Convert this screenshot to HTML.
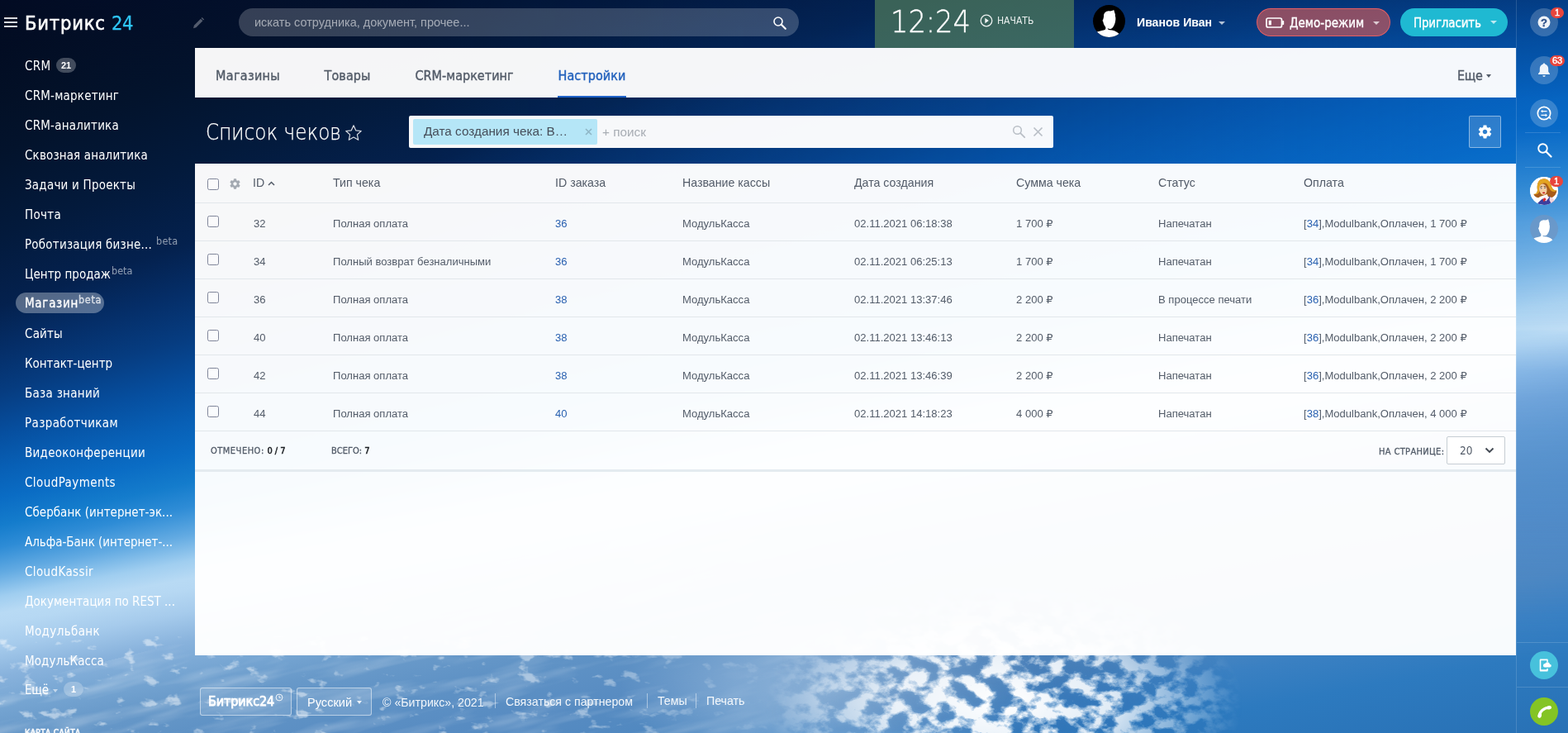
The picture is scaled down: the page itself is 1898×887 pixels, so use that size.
<!DOCTYPE html>
<html lang="ru">
<head>
<meta charset="utf-8">
<title>Список чеков</title>
<style>
*{box-sizing:border-box;margin:0;padding:0}
html,body{width:1898px;height:887px;overflow:hidden}
body{position:relative;font-family:"Liberation Sans","DejaVu Sans",sans-serif;font-size:13px;color:#535c69;background:#0b5cb5}
a{text-decoration:none;color:inherit}
.a{position:absolute;white-space:nowrap}
.os{font-family:"DejaVu Sans Condensed","DejaVu Sans","Liberation Sans",sans-serif;font-stretch:condensed}
.lt{font-family:"DejaVu Sans Light","DejaVu Sans","Liberation Sans",sans-serif;font-weight:200}
svg{display:block}
#bg{position:absolute;left:0;top:0;width:1898px;height:887px;overflow:hidden}
#vig{position:absolute;left:0;top:0;width:1898px;height:130px;background:linear-gradient(180deg,rgba(2,14,52,.3) 0,rgba(2,14,52,.14) 50px,rgba(2,14,52,0) 120px)}
/* ---------- header ---------- */
#page{position:absolute;left:0;top:0;width:1898px;height:887px;overflow:hidden;transform:translateZ(0);will-change:transform}
#hdr{position:absolute;left:0;top:0;width:1835px;height:58px;color:#fff}
#burger{left:5px;top:21px;width:16px;height:12px}
#burger i{position:absolute;left:0;width:16px;height:2px;background:rgba(255,255,255,.85)}
#logo{left:30px;top:13px;height:30px;line-height:30px;font-size:23.5px;color:#fff;letter-spacing:.8px;-webkit-text-stroke:.55px #fff}
#logo b{color:#2fc6f6;font-weight:400;margin-left:1px;letter-spacing:-.4px;-webkit-text-stroke:.3px #2fc6f6}
#search{left:289px;top:10px;width:678px;height:34px;border-radius:17px;background:rgba(255,255,255,.2)}
#search span{position:absolute;left:19px;top:0;line-height:34px;font-size:14.5px;color:rgba(255,255,255,.55)}
#timer{left:1059px;top:0;width:241px;height:58px;background:rgba(80,124,90,.72)}
#clock{left:1078px;top:1px;height:50px;line-height:50px;font-size:38px;color:#fff;transform-origin:0 50%;transform:scaleX(.885);-webkit-text-stroke:.35px #fff}
#start{left:1207px;top:17px;line-height:17px;font-size:12px;color:rgba(255,255,255,.9)}
#ava{left:1323px;top:6px;width:39px;height:39px;border-radius:50%;background:#000;overflow:hidden}
#uname{left:1376px;top:17px;line-height:20px;font-size:14.1px;font-weight:700;color:#fff}
.caret{position:absolute;width:0;height:0;border-left:4px solid transparent;border-right:4px solid transparent;border-top:4.5px solid rgba(255,255,255,.7)}
#demo{left:1521px;top:10px;width:162px;height:34px;border-radius:17px;background:rgba(196,88,91,.7);border:1px solid rgba(240,96,100,.9)}
#demo span{position:absolute;left:39px;top:0;line-height:34px;font-size:15px;color:#fff;-webkit-text-stroke:.35px #fff}
#inv{left:1695px;top:10px;width:130px;height:34px;border-radius:17px;background:#1fb9d2}
#inv span{position:absolute;left:16px;top:0;line-height:36px;font-size:15px;letter-spacing:-.18px;color:#fff;-webkit-text-stroke:.35px #fff}
/* ---------- sidebar ---------- */
#menu{position:absolute;left:0;top:0;width:236px;height:887px;color:#fff}
.mi{position:absolute;left:30px;height:26px;line-height:26px;font-size:15px;color:#fff;white-space:nowrap}
.mi sup{font-size:12.5px;color:rgba(255,255,255,.55);position:relative;top:.5px;vertical-align:top;line-height:16px;margin-left:1px}
.bdg{position:absolute;height:18px;line-height:18px;border-radius:9px;background:rgba(255,255,255,.25);color:#fff;font-size:11px;font-weight:700;text-align:center;font-family:"Liberation Sans",sans-serif;font-stretch:normal}
#act{left:19px;top:354px;width:107px;height:25px;border-radius:12.5px;background:rgba(255,255,255,.32)}
/* ---------- content ---------- */
#tabs{position:absolute;left:236px;top:58px;width:1599px;height:60px;background:rgba(255,255,255,.96)}
.tab{position:absolute;top:22px;line-height:24px;font-size:16px;color:#535c69;white-space:nowrap;-webkit-text-stroke:.4px currentColor}
.tab.on{color:#2362bd}
#tabline{left:439px;top:58px;width:83px;height:2px;background:#1f62c8}
#title{left:249px;top:142px;height:36px;line-height:36px;font-size:26px;color:#fff;transform-origin:0 50%;transform:scaleX(.89);-webkit-text-stroke:.25px #fff}
#filter{left:495px;top:140px;width:780px;height:39px;background:rgba(255,255,255,.97);border-radius:2px}
#chip{left:5px;top:4px;width:223px;height:31px;background:#b5e6f7;border-radius:2px}
#chip span{position:absolute;left:13px;top:0;line-height:30px;font-size:15.3px;color:#464e5a}
#fph{left:234px;top:0;line-height:39px;font-size:15.3px;color:#a8adb4}
#cfg{left:1778px;top:140px;width:39px;height:39px;border:1px solid rgba(255,255,255,.45);border-radius:2px;background:rgba(255,255,255,.16)}
#grid{position:absolute;left:236px;top:198px;width:1599px;height:595px;background:rgba(255,255,255,.97)}
.hl{position:absolute;left:0;width:1599px;height:1px;background:#e2e7eb}
.th{position:absolute;top:12px;line-height:22px;font-size:14.2px;color:#535c69;white-space:nowrap}
.td{position:absolute;line-height:20px;font-size:13.05px;color:#535c69;white-space:nowrap}
.td a,.lnk{color:#2a61b0}
.cb{position:absolute;left:15px;width:14px;height:14px;border:1.8px solid #80869a;border-radius:2.5px;background:rgba(255,255,255,.4)}
.ft{position:absolute;top:338px;line-height:20px;font-size:11px;color:#535c69;white-space:nowrap;-webkit-text-stroke:.3px currentColor}
.ft b{color:#1b1e22;font-weight:400;-webkit-text-stroke:.5px #1b1e22;letter-spacing:0}
#psz{left:1515px;top:330px;width:71px;height:34px;border:1px solid #c6cdd3;border-radius:2px;background:rgba(255,255,255,.9)}
#psz span{position:absolute;left:15px;top:0;line-height:33px;font-size:13.5px;color:#535c69}
#gbot{left:0;top:370px;width:1599px;height:3px;background:#e4ebf0}
/* ---------- footer ---------- */
.fbtn{position:absolute;top:832px;height:34px;border:1px solid rgba(255,255,255,.5);border-radius:3px;background:rgba(255,255,255,.12);color:#fff}
.ftx{position:absolute;top:839px;line-height:20px;font-size:14.2px;color:rgba(255,255,255,.92);white-space:nowrap}
.fsep{position:absolute;top:839px;width:1px;height:18px;background:rgba(255,255,255,.45)}
/* ---------- right bar ---------- */
#rbar{position:absolute;left:1835px;top:0;width:63px;height:887px;border-left:1px solid rgba(255,255,255,.14);background:linear-gradient(180deg,rgba(255,255,255,0) 150px,rgba(255,255,255,.22) 270px,rgba(255,255,255,.2) 340px,rgba(255,255,255,.12) 398px,rgba(60,135,215,0) 402px,rgba(60,135,215,.3) 450px,rgba(60,135,215,.36) 520px,rgba(60,135,215,.3) 620px,rgba(60,135,215,.1) 720px,rgba(60,135,215,0) 800px)}
.rc{position:absolute;left:16px;width:34px;height:34px;border-radius:50%;background:rgba(255,255,255,.2)}
.rb{position:absolute;height:13px;min-width:16px;padding:0 3px;border-radius:7px;background:#e8453c;color:#fff;font-size:11px;line-height:13px;text-align:center;-webkit-text-stroke:.4px #fff;font-family:"Liberation Sans",sans-serif}
.rs{position:absolute;left:10px;width:43px;height:1px;background:rgba(255,255,255,.15)}
</style>
</head>
<body>
<div id="bg" style="background:linear-gradient(169.763deg,rgba(184,218,244,0) 729.2px,#b8daf4 730.2px,#b6d8f3 742.0px,#a6cbec 769.6px,#88b2dc 805.0px,#76a5d2 840.4px,#6899c9 873.9px,#5f92c5 909.3px,#588cc2 962.4px,#5088c0 1016.6px,#3a80c2 1064.8px,#2d7abf 1111.0px,#2870b4 1222.2px),conic-gradient(from 60.0deg at -2453px 1185px,#020818 1.398deg,#020a1c 4.357deg,#03132c 7.829deg,#031a3c 9.868deg,#04214e 11.627deg,#052e68 12.763deg,#063c80 13.849deg,#064e9e 14.904deg,#0860b6 15.904deg,#0a6cc4 16.649deg,#147ccc 17.377deg,#2e8cd6 17.975deg,#62aae2 18.665deg,#a0cef0 19.314deg,#b8daf4 19.763deg,#b8daf4 30deg)"><svg width="1898" height="887" viewBox="0 0 1898 887" style="position:absolute;left:0;top:0">
<defs>
<linearGradient id="rt" gradientUnits="userSpaceOnUse" x1="500" y1="0" x2="1750" y2="0"><stop offset="0" stop-color="#0062cd" stop-opacity="0"/><stop offset="1" stop-color="#0062cd" stop-opacity=".3"/></linearGradient>
<linearGradient id="rtm" gradientUnits="userSpaceOnUse" x1="0" y1="0" x2="0" y2="400"><stop offset="0" stop-color="#fff"/><stop offset=".5" stop-color="#fff"/><stop offset="1" stop-color="#fff" stop-opacity="0"/></linearGradient>
<mask id="mk"><rect width="1898" height="400" fill="url(#rtm)"/></mask>
<filter id="cl" x="0" y="0" width="100%" height="100%" color-interpolation-filters="sRGB">
<feTurbulence type="fractalNoise" baseFrequency="0.04 0.055" numOctaves="5" seed="7"/>
<feColorMatrix type="matrix" values="0 0 0 0 1  0 0 0 0 1  0 0 0 0 1  5 0 0 0 -2.05"/>
<feGaussianBlur stdDeviation=".7"/>
</filter>
<filter id="sh" x="0" y="0" width="100%" height="100%" color-interpolation-filters="sRGB">
<feTurbulence type="fractalNoise" baseFrequency="0.04 0.055" numOctaves="5" seed="7"/>
<feColorMatrix type="matrix" values="0 0 0 0 .2  0 0 0 0 .4  0 0 0 0 .64  -4 0 0 0 2.4"/>
<feGaussianBlur stdDeviation="2"/>
</filter>
<filter id="cl2" x="0" y="0" width="100%" height="100%" color-interpolation-filters="sRGB">
<feTurbulence type="fractalNoise" baseFrequency="0.009 0.06" numOctaves="3" seed="11"/>
<feColorMatrix type="matrix" values="0 0 0 0 1  0 0 0 0 1  0 0 0 0 1  2.6 0 0 0 -1.2"/>
</filter>
<filter id="cl3" x="0" y="0" width="100%" height="100%" color-interpolation-filters="sRGB">
<feTurbulence type="fractalNoise" baseFrequency="0.04 0.07" numOctaves="4" seed="23"/>
<feColorMatrix type="matrix" values="0 0 0 0 1  0 0 0 0 1  0 0 0 0 1  7 0 0 0 -4.5"/>
</filter>
<radialGradient id="m1" gradientUnits="userSpaceOnUse" cx="1215" cy="850" r="290" gradientTransform="translate(1215 850) scale(1 .5) translate(-1215 -850)">
<stop offset="0" stop-color="#fff"/><stop offset=".45" stop-color="#fff" stop-opacity=".85"/><stop offset=".75" stop-color="#fff" stop-opacity=".4"/><stop offset="1" stop-color="#fff" stop-opacity="0"/>
</radialGradient>
<linearGradient id="m2" gradientUnits="userSpaceOnUse" x1="0" y1="0" x2="1150" y2="0">
<stop offset="0" stop-color="#fff" stop-opacity=".7"/><stop offset=".7" stop-color="#fff" stop-opacity=".55"/><stop offset="1" stop-color="#fff" stop-opacity="0"/>
</linearGradient>
<linearGradient id="m3" gradientUnits="userSpaceOnUse" x1="0" y1="0" x2="1000" y2="0">
<stop offset="0" stop-color="#fff" stop-opacity=".8"/><stop offset=".7" stop-color="#fff" stop-opacity=".7"/><stop offset="1" stop-color="#fff" stop-opacity="0"/>
</linearGradient>
<radialGradient id="hz" gradientUnits="userSpaceOnUse" cx="1010" cy="835" r="260" gradientTransform="translate(1010 835) scale(1 .42) translate(-1010 -835)"><stop offset="0" stop-color="#cfe2f4" stop-opacity=".5"/><stop offset=".5" stop-color="#cfe2f4" stop-opacity=".3"/><stop offset="1" stop-color="#cfe2f4" stop-opacity="0"/></radialGradient>
<mask id="mc1"><rect x="900" y="700" width="650" height="187" fill="url(#m1)"/></mask>
<mask id="mc2"><rect x="-200" y="600" width="1500" height="500" fill="url(#m2)"/></mask>
<mask id="mc3"><rect x="0" y="770" width="1000" height="117" fill="url(#m3)"/></mask>
</defs>
<rect width="1898" height="400" fill="url(#rt)" mask="url(#mk)"/>
<g mask="url(#mc2)" opacity=".32"><rect x="-200" y="760" width="1500" height="400" filter="url(#cl2)" transform="rotate(-14 300 830)"/></g>
<g mask="url(#mc3)" opacity=".6"><rect x="0" y="770" width="1000" height="117" filter="url(#cl3)"/></g>
<rect x="700" y="700" width="700" height="187" fill="url(#hz)"/>
<g mask="url(#mc1)"><rect x="900" y="700" width="650" height="187" filter="url(#sh)" opacity=".3"/><rect x="900" y="700" width="650" height="187" filter="url(#cl)"/></g>
</svg>
<div id="vig"></div></div>
<div id="page">
<div id="hdr">
<div class="a" id="burger"><i style="top:0"></i><i style="top:5px"></i><i style="top:10px"></i></div>
<div class="a os" id="logo">Битрикс<b> 24</b></div>
<svg class="a" style="left:232px;top:20px" width="16" height="16" viewBox="0 0 16 16"><path d="M2 14.200l.9-3.400 8-8 2.500 2.500-8 8zM11.600 2.100l1-1 2.500 2.500-1 1z" fill="rgba(255,255,255,.32)"/></svg>
<div class="a" id="search"><span>искать сотрудника, документ, прочее...</span>
<svg class="a" style="left:646px;top:9px" width="18" height="18" viewBox="0 0 18 18"><circle cx="7" cy="7" r="5" fill="none" stroke="#fff" stroke-width="1.600"/><path d="M10.800 10.800l5 5" stroke="#fff" stroke-width="2.200" stroke-linecap="round"/></svg></div>
<div class="a" id="timer"></div>
<div class="a lt" id="clock">12:24</div>
<svg class="a" style="left:1186px;top:17px" width="16" height="16" viewBox="0 0 16 16"><circle cx="8" cy="8" r="6.800" fill="none" stroke="rgba(255,255,255,.9)" stroke-width="1.300"/><path d="M6.300 4.800l4.600 3.200-4.600 3.200z" fill="rgba(255,255,255,.95)"/></svg>
<div class="a os" id="start">НАЧАТЬ</div>
<div class="a" id="ava"><svg width="39" height="39" viewBox="0 0 39 39"><path d="M5 32.600C9 31.200 13 30.400 14.600 29.900c.9-.8.9-2.200.5-3.500-1.600-1.800-2.500-4.200-2.700-6-.9-.7-1-2.300-.1-3 .4-1.300.7-2.400.8-4.100-.2-3.300 2.400-5.800 5.900-6 2.500.3 4.500-.1 6.300-1.300.2 1.500 1.100 2.500.9 3.500.8 1.500 1 2.500.6 3.500.8 2 .7 4 .4 6-.4 3.500-1.700 6.500-3.700 8.800-1.500 1.500-3.900 1.700-5.700.5-.2 1.200.800 1.700 2.200 1.900 4 .2 8 1.300 11.300 4.400v5.500H5z" fill="#fff"/></svg></div>
<div class="a" id="uname">Иванов Иван</div>
<i class="caret" style="left:1475px;top:26px"></i>
<div class="a" id="demo"><svg class="a" style="left:10px;top:10px" width="23" height="13" viewBox="0 0 23 13"><rect x="1" y="1" width="18.500" height="11" rx="2" fill="none" stroke="#fff" stroke-width="1.700"/><rect x="20" y="4" width="2.200" height="5" rx=".8" fill="#fff"/><rect x="3.700" y="3.700" width="3.200" height="5.600" fill="#fff"/></svg><span class="os">Демо-режим</span><i class="caret" style="left:140px;top:15px"></i></div>
<div class="a" id="inv"><span class="os">Пригласить</span><i class="caret" style="left:109px;top:15px"></i></div>
</div>
<div id="menu" class="os">
<div class="a" id="act"></div>
<div class="mi" style="top:67px;letter-spacing:0.33px;">CRM</div>
<div class="mi" style="top:103px;letter-spacing:0.21px;">CRM-маркетинг</div>
<div class="mi" style="top:139px;letter-spacing:0.22px;">CRM-аналитика</div>
<div class="mi" style="top:175px;letter-spacing:0.15px;">Сквозная аналитика</div>
<div class="mi" style="top:211px;letter-spacing:0.22px;">Задачи и Проекты</div>
<div class="mi" style="top:247px;letter-spacing:0.30px;">Почта</div>
<div class="mi" style="top:283px;letter-spacing:0.22px;">Роботизация бизне...<sup style="margin-left:5px">beta</sup></div>
<div class="mi" style="top:319px;letter-spacing:0.02px;">Центр продаж<sup style="margin-left:1px">beta</sup></div>
<div class="mi" style="top:354px;letter-spacing:0.71px;-webkit-text-stroke:.3px #fff;">Магазин<sup style="margin-left:0;color:rgba(255,255,255,.6)">beta</sup></div>
<div class="mi" style="top:391px;letter-spacing:0.20px;">Сайты</div>
<div class="mi" style="top:427px;letter-spacing:-0.03px;">Контакт-центр</div>
<div class="mi" style="top:463px;letter-spacing:0.28px;">База знаний</div>
<div class="mi" style="top:499px;letter-spacing:0.37px;">Разработчикам</div>
<div class="mi" style="top:535px;letter-spacing:0.29px;">Видеоконференции</div>
<div class="mi" style="top:571px;letter-spacing:0.42px;">CloudPayments</div>
<div class="mi" style="top:607px;letter-spacing:0.03px;">Сбербанк (интернет-эк...</div>
<div class="mi" style="top:643px;letter-spacing:-0.02px;">Альфа-Банк (интернет-...</div>
<div class="mi" style="top:679px;letter-spacing:0.38px;">CloudKassir</div>
<div class="mi" style="top:715px;letter-spacing:0.00px;">Документация по REST ...</div>
<div class="mi" style="top:751px;letter-spacing:0.36px;">Модульбанк</div>
<div class="mi" style="top:787px;letter-spacing:0.11px;">МодульКасса</div>
<div class="bdg" style="left:68px;top:70px;width:24px">21</div>
<div class="mi" style="top:822px;letter-spacing:-.3px">Ещё</div>
<i class="caret" style="left:64px;top:834px;border-left-width:3.5px;border-right-width:3.5px;border-top-width:4px;border-top-color:rgba(255,255,255,.55)"></i>
<div class="bdg" style="left:77px;top:825px;width:24px">1</div>
<div class="a" style="left:30px;top:881px;line-height:12px;font-size:10px;color:rgba(255,255,255,.9);letter-spacing:.4px;-webkit-text-stroke:.6px rgba(255,255,255,.9)">КАРТА САЙТА</div>
</div>
<div id="tabs" class="os">
<div class="tab" style="left:25px;letter-spacing:0.32px">Магазины</div>
<div class="tab" style="left:156.5px;letter-spacing:0.10px">Товары</div>
<div class="tab" style="left:266.5px;letter-spacing:0.02px">CRM-маркетинг</div>
<div class="tab on" style="left:439.5px;letter-spacing:0.08px">Настройки</div>
<div class="a" id="tabline"></div>
<div class="tab" style="left:1528px;letter-spacing:-.3px">Еще</div>
<i class="caret" style="left:1563px;top:32px;border-left-width:3.5px;border-right-width:3.5px;border-top:4px solid #535c69"></i>
</div>
<div class="a lt" id="title">Список чеков</div>
<svg class="a" style="left:417px;top:150px" width="22" height="21" viewBox="0 0 22 21"><path d="M11 1.800l2.700 6 6.500.7-4.800 4.400 1.300 6.400L11 16.100l-5.700 3.200 1.300-6.400L1.800 8.500l6.500-.7z" fill="none" stroke="rgba(255,255,255,.85)" stroke-width="1.200" stroke-linejoin="round"/></svg>
<div class="a" id="filter"><div class="a" id="chip"><span>Дата создания чека: В…</span><svg class="a" style="left:208px;top:11px" width="9" height="9" viewBox="0 0 9 9"><path d="M1 1l7 7M8 1l-7 7" stroke="#8fb6c6" stroke-width="1.600"/></svg></div><div class="a" id="fph">+ поиск</div>
<svg class="a" style="left:730px;top:11px" width="17" height="17" viewBox="0 0 17 17"><circle cx="6.500" cy="6.500" r="4.800" fill="none" stroke="#b9bfc6" stroke-width="1.500"/><path d="M10.200 10.200l5 5" stroke="#b9bfc6" stroke-width="1.800" stroke-linecap="round"/></svg>
<svg class="a" style="left:755px;top:13px" width="13" height="13" viewBox="0 0 13 13"><path d="M1.500 1.500l10 10M11.500 1.500l-10 10" stroke="#b9bfc6" stroke-width="1.700"/></svg></div>
<div class="a" id="cfg"><svg class="a" style="left:9px;top:9px" width="19" height="19" viewBox="0 0 24 24"><path d="M19.430 12.980c.040-.320.070-.640.070-.980s-.030-.660-.070-.980l2.110-1.650c.190-.150.240-.420.120-.640l-2-3.460c-.120-.220-.390-.300-.610-.220l-2.490 1c-.520-.400-1.080-.730-1.690-.980l-.380-2.650C14.460 2.180 14.250 2 14 2h-4c-.250 0-.460.180-.490.420l-.380 2.650c-.610.250-1.170.590-1.690.980l-2.490-1c-.230-.090-.490 0-.610.220l-2 3.460c-.130.220-.070.490.120.640l2.110 1.650c-.040.320-.070.650-.070.980s.030.660.070.980l-2.110 1.650c-.190.150-.240.420-.120.640l2 3.460c.120.220.390.300.610.220l2.490-1c.520.400 1.080.730 1.690.980l.380 2.650c.030.240.240.420.490.420h4c.250 0 .460-.180.490-.420l.380-2.650c.610-.250 1.170-.590 1.690-.980l2.490 1c.230.090.490 0 .610-.220l2-3.460c.120-.220.070-.490-.120-.640l-2.110-1.650zM12 15.500c-1.930 0-3.500-1.570-3.500-3.500s1.570-3.500 3.500-3.500 3.500 1.570 3.500 3.500-1.570 3.500-3.500 3.500z" fill="#fff"/></svg></div>
<div id="grid">
<div class="cb" style="top:18px"></div>
<svg class="a" style="left:41px;top:17px" width="15" height="15" viewBox="0 0 24 24"><path d="M19.430 12.980c.040-.320.070-.640.070-.980s-.030-.660-.070-.980l2.110-1.650c.190-.150.240-.420.120-.640l-2-3.460c-.120-.220-.390-.300-.610-.220l-2.490 1c-.520-.400-1.080-.730-1.690-.980l-.380-2.650C14.460 2.180 14.250 2 14 2h-4c-.250 0-.460.180-.490.420l-.380 2.650c-.610.250-1.170.590-1.690.980l-2.490-1c-.230-.090-.490 0-.610.220l-2 3.460c-.130.220-.070.490.120.640l2.110 1.650c-.040.320-.070.650-.070.980s.030.660.070.980l-2.110 1.650c-.190.150-.240.420-.120.640l2 3.460c.120.220.390.300.610.220l2.490-1c.520.400 1.080.730 1.690.980l.380 2.650c.030.240.240.420.490.420h4c.250 0 .460-.180.490-.420l.380-2.650c.610-.250 1.170-.590 1.690-.980l2.490 1c.230.090.490 0 .610-.220l2-3.460c.120-.220.070-.490-.120-.640l-2.110-1.650zM12 15.500c-1.930 0-3.500-1.570-3.500-3.500s1.570-3.500 3.500-3.500 3.500 1.570 3.500 3.500-1.570 3.500-3.500 3.500z" fill="#a3a9b1"/></svg>
<div class="th" style="left:70px">ID</div>
<div class="th" style="left:167px">Тип чека</div>
<div class="th" style="left:436px">ID заказа</div>
<div class="th" style="left:590px">Название кассы</div>
<div class="th" style="left:798px">Дата создания</div>
<div class="th" style="left:994px">Сумма чека</div>
<div class="th" style="left:1166px">Статус</div>
<div class="th" style="left:1342px">Оплата</div>
<svg class="a" style="left:88px;top:21px" width="9" height="6" viewBox="0 0 9 6"><path d="M1 5l3.500-3.500L8 5" fill="none" stroke="#535c69" stroke-width="1.500"/></svg>
<div class="hl" style="top:47px"></div>
<div class="cb" style="top:63px"></div>
<div class="td" style="left:71px;top:63px">32</div>
<div class="td" style="left:167px;top:63px">Полная оплата</div>
<div class="td" style="left:436px;top:63px"><a>36</a></div>
<div class="td" style="left:590px;top:63px">МодульКасса</div>
<div class="td" style="left:798px;top:63px">02.11.2021 06:18:38</div>
<div class="td" style="left:994px;top:63px">1 700 ₽</div>
<div class="td" style="left:1166px;top:63px">Напечатан</div>
<div class="td" style="left:1342px;top:63px">[<a>34</a>],Modulbank,Оплачен, 1 700 ₽</div>
<div class="hl" style="top:93px"></div>
<div class="cb" style="top:109px"></div>
<div class="td" style="left:71px;top:109px">34</div>
<div class="td" style="left:167px;top:109px">Полный возврат безналичными</div>
<div class="td" style="left:436px;top:109px"><a>36</a></div>
<div class="td" style="left:590px;top:109px">МодульКасса</div>
<div class="td" style="left:798px;top:109px">02.11.2021 06:25:13</div>
<div class="td" style="left:994px;top:109px">1 700 ₽</div>
<div class="td" style="left:1166px;top:109px">Напечатан</div>
<div class="td" style="left:1342px;top:109px">[<a>34</a>],Modulbank,Оплачен, 1 700 ₽</div>
<div class="hl" style="top:139px"></div>
<div class="cb" style="top:155px"></div>
<div class="td" style="left:71px;top:155px">36</div>
<div class="td" style="left:167px;top:155px">Полная оплата</div>
<div class="td" style="left:436px;top:155px"><a>38</a></div>
<div class="td" style="left:590px;top:155px">МодульКасса</div>
<div class="td" style="left:798px;top:155px">02.11.2021 13:37:46</div>
<div class="td" style="left:994px;top:155px">2 200 ₽</div>
<div class="td" style="left:1166px;top:155px">В процессе печати</div>
<div class="td" style="left:1342px;top:155px">[<a>36</a>],Modulbank,Оплачен, 2 200 ₽</div>
<div class="hl" style="top:185px"></div>
<div class="cb" style="top:201px"></div>
<div class="td" style="left:71px;top:201px">40</div>
<div class="td" style="left:167px;top:201px">Полная оплата</div>
<div class="td" style="left:436px;top:201px"><a>38</a></div>
<div class="td" style="left:590px;top:201px">МодульКасса</div>
<div class="td" style="left:798px;top:201px">02.11.2021 13:46:13</div>
<div class="td" style="left:994px;top:201px">2 200 ₽</div>
<div class="td" style="left:1166px;top:201px">Напечатан</div>
<div class="td" style="left:1342px;top:201px">[<a>36</a>],Modulbank,Оплачен, 2 200 ₽</div>
<div class="hl" style="top:231px"></div>
<div class="cb" style="top:247px"></div>
<div class="td" style="left:71px;top:247px">42</div>
<div class="td" style="left:167px;top:247px">Полная оплата</div>
<div class="td" style="left:436px;top:247px"><a>38</a></div>
<div class="td" style="left:590px;top:247px">МодульКасса</div>
<div class="td" style="left:798px;top:247px">02.11.2021 13:46:39</div>
<div class="td" style="left:994px;top:247px">2 200 ₽</div>
<div class="td" style="left:1166px;top:247px">Напечатан</div>
<div class="td" style="left:1342px;top:247px">[<a>36</a>],Modulbank,Оплачен, 2 200 ₽</div>
<div class="hl" style="top:277px"></div>
<div class="cb" style="top:293px"></div>
<div class="td" style="left:71px;top:293px">44</div>
<div class="td" style="left:167px;top:293px">Полная оплата</div>
<div class="td" style="left:436px;top:293px"><a>40</a></div>
<div class="td" style="left:590px;top:293px">МодульКасса</div>
<div class="td" style="left:798px;top:293px">02.11.2021 14:18:23</div>
<div class="td" style="left:994px;top:293px">4 000 ₽</div>
<div class="td" style="left:1166px;top:293px">Напечатан</div>
<div class="td" style="left:1342px;top:293px">[<a>38</a>],Modulbank,Оплачен, 4 000 ₽</div>
<div class="hl" style="top:323px"></div>
<div class="ft os" style="left:19px;letter-spacing:.5px">ОТМЕЧЕНО: <b>0 / 7</b></div>
<div class="ft os" style="left:165px">ВСЕГО: <b>7</b></div>
<div class="ft os" style="left:1433px;top:339px;letter-spacing:.35px">НА СТРАНИЦЕ:</div>
<div class="a" id="psz"><span class="os">20</span><svg class="a" style="left:45px;top:12px" width="12" height="8" viewBox="0 0 12 8"><path d="M1.500 1.500l4.500 4.500 4.500-4.500" fill="none" stroke="#3f4650" stroke-width="1.800"/></svg></div>
<div class="a" id="gbot"></div>
</div>
<div class="fbtn" style="left:242px;width:111px"><div class="a os" style="left:9px;top:1px;line-height:30px;font-size:16px;color:#fff;letter-spacing:-.1px;-webkit-text-stroke:.75px #fff">Битрикс24</div><svg class="a" style="left:90px;top:6px" width="10" height="10" viewBox="0 0 11 11"><circle cx="5.500" cy="5.500" r="4.300" fill="none" stroke="#fff" stroke-width="1"/><path d="M5.500 3v2.700h2" fill="none" stroke="#fff" stroke-width="1"/></svg></div>
<div class="fbtn" style="left:359px;width:91px"><div class="a" style="left:12px;top:1px;line-height:33px;font-size:14.600px;color:#fff">Русский</div><i class="caret" style="left:72px;top:15px;border-left-width:3.5px;border-right-width:3.5px;border-top-width:4px;border-top-color:rgba(255,255,255,.85)"></i></div>
<div class="ftx" style="left:463px;top:840px">© «Битрикс», 2021</div>
<div class="fsep" style="left:599px"></div>
<div class="ftx" style="left:612px">Связаться с партнером</div>
<div class="fsep" style="left:783px"></div>
<div class="ftx" style="left:796px;top:838px">Темы</div>
<div class="fsep" style="left:842px"></div>
<div class="ftx" style="left:855px;top:838px">Печать</div>
<div id="rbar">
<div class="rc" style="top:10px"><svg width="34" height="34" viewBox="0 0 34 34"><circle cx="17" cy="17" r="7.500" fill="#fff" fill-opacity=".92"/><text x="17" y="21.500" text-anchor="middle" font-family="Liberation Sans, sans-serif" font-weight="700" font-size="13" fill="#2c4f88" stroke="#2c4f88" stroke-width=".3">?</text></svg></div>
<div class="rb" style="left:41px;top:9px">1</div>
<div class="rc" style="top:68px"><svg width="34" height="34" viewBox="0 0 34 34"><path d="M17 8.500c-.8 0-1.400.6-1.400 1.300-2.400.7-3.800 2.800-3.800 5.400v3.600l-1.800 2.400v.9h14v-.9l-1.800-2.400v-3.600c0-2.600-1.400-4.700-3.800-5.400 0-.7-.6-1.300-1.400-1.300zM15.300 23.200a1.700 1.700 0 0 0 3.400 0z" fill="#fff" fill-opacity=".92"/></svg></div>
<div class="rb" style="left:40px;top:67px">63</div>
<div class="rc" style="top:120px"><svg width="34" height="34" viewBox="0 0 34 34"><circle cx="17" cy="17" r="7.700" fill="none" stroke="#fff" stroke-width="1.700"/><path d="M22.300 22.800l3.400 2-1.300-3.600z" fill="#fff"/><path d="M14.200 14.600h6.300M13.500 19.400h6.300" stroke="#fff" stroke-width="1.200" fill="none"/><path d="M15.300 12.700l-2.300 1.900 2.300 1.900zM18.700 17.500l2.300 1.900-2.300 1.900z" fill="#fff"/></svg></div>
<div class="rs" style="top:160px"></div>
<svg class="a" style="left:24px;top:172px" width="20" height="20" viewBox="0 0 20 20"><circle cx="7.500" cy="7.500" r="5.300" fill="none" stroke="#fff" stroke-width="1.900"/><path d="M11.500 11.500l6 6" stroke="#fff" stroke-width="2.300" stroke-linecap="round"/></svg>
<div class="rs" style="top:202px"></div>
<div class="rc" style="top:214px;background:#fff;overflow:hidden"><svg width="34" height="34" viewBox="0 0 34 34"><circle cx="17" cy="17" r="17" fill="#fff"/><path d="M4.300 20.800C7 22 9 19 9 16 8 9 10 3 16 2.600c5-.3 8 2.400 9.500 7.400 1 4 3.500 7 6.900 6.500-.4 4.500-3.400 8.500-7.900 9-2.500-.5-3.500-2.500-3.500-4.500l-9 3c-2 2.500-6 1-7.700-3.200z" fill="#a85c1a"/><path d="M9 16C8 9 10 3 16 2.600c5-.3 8 2.400 9.500 7.400 1 4 3.500 7 6.900 6.500-2.400 2.500-6.400 1.500-8.400-1.500-2-4-3-7-6-7.500-5-.5-7 3.500-6.500 9.500-.5 3-3.500 5.500-7.200 3.800C7 21 9 19 9 16z" fill="#e3a421"/><ellipse cx="15.800" cy="15.200" rx="4.700" ry="6.700" fill="#f3cda2" transform="rotate(-8 15.800 15.200)"/><path d="M12.300 12.300l2.600-.9M16.600 11.400l2.800.6" stroke="#5a3a1c" stroke-width=".9" fill="none"/><ellipse cx="13.600" cy="13.800" rx="1" ry=".6" fill="#4a5a78"/><ellipse cx="18" cy="13.300" rx="1" ry=".6" fill="#4a5a78"/><ellipse cx="16.700" cy="19.300" rx="1.700" ry=".9" fill="#c4161c"/><path d="M8 33l8.500-8 7.500-1.500 5 5.500-3 6z" fill="#3b3f9e"/><path d="M15 26.500l3.500-3.500 5 1.500-4 5z" fill="#fbeff2"/><path d="M15.300 27l2.700-1.800 1.600 2-2.800 3.300z" fill="#d8262c"/><path d="M24 24.500c3 0 5 2 5.500 5l-3.500 4-2.500-5.500z" fill="#f2d5dc"/></svg></div>
<div class="rb" style="left:40px;top:213px">1</div>
<div class="rc" style="top:260px;background:rgba(110,150,196,.78);overflow:hidden"><svg width="34" height="34" viewBox="0 0 39 39"><path d="M5 32.600C9 31.200 13 30.400 14.600 29.900c.9-.8.9-2.200.5-3.500-1.600-1.800-2.500-4.200-2.700-6-.9-.7-1-2.300-.1-3 .4-1.300.7-2.400.8-4.100-.2-3.300 2.400-5.800 5.900-6 2.500.3 4.500-.1 6.300-1.300.2 1.500 1.100 2.500.9 3.500.8 1.500 1 2.500.6 3.500.8 2 .7 4 .4 6-.4 3.500-1.700 6.500-3.700 8.800-1.500 1.500-3.900 1.700-5.700.5-.2 1.200.800 1.700 2.200 1.900 4 .2 8 1.300 11.300 4.400v5.500H5z" fill="#fff"/></svg></div>
<div class="rs" style="left:0;width:63px;top:777px"></div>
<div class="rc" style="top:788px;background:#47c1dc"><svg width="34" height="34" viewBox="0 0 34 34"><path d="M13 9.500h7.500c.8 0 1.300.5 1.300 1.300v2.200h-1.500v-1.800h-7v11h7v-1.200h1.500v2.200c0 .8-.5 1.300-1.300 1.300H13c-.8 0-1.300-.5-1.300-1.300V10.800c0-.8.5-1.300 1.300-1.300z" fill="#fff"/><path d="M18 19.500a2.200 2.200 0 0 1 .3-4.400 3 3 0 0 1 5.700.6 1.900 1.900 0 0 1-.2 3.800z" fill="#fff"/></svg></div>
<div class="rs" style="left:0;width:63px;top:831px"></div>
<div class="rc" style="top:844px;background:#84c425"><svg width="34" height="34" viewBox="0 0 34 34"><path d="M11.400 22.600C11.200 17.400 16.500 12.300 24 12.100" fill="none" stroke="#fff" stroke-width="3.300" stroke-linecap="round"/><ellipse cx="11.700" cy="21.700" rx="2.300" ry="3.100" fill="#fff" transform="rotate(12 11.700 21.700)"/><ellipse cx="23" cy="12.300" rx="3" ry="2.200" fill="#fff" transform="rotate(-10 23 12.300)"/></svg></div>
</div>
</div>
</body></html>
